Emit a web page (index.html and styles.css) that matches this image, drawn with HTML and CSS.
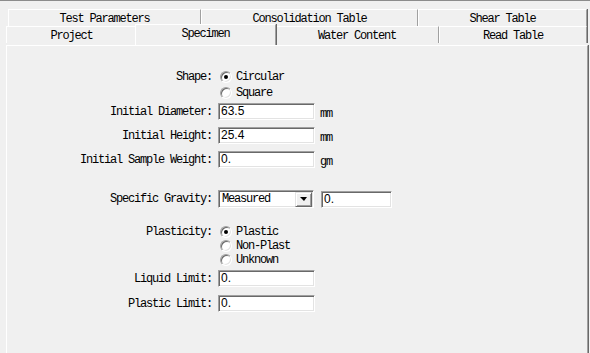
FILE: index.html
```html
<!DOCTYPE html>
<html lang="en">
<head>
  <meta charset="UTF-8">
  <title>Specimen</title>
  <link rel="stylesheet" href="styles.css">
</head>
<body>
  <div class="window">
    <div class="tabs">
      <div class="tab-row back">
        <div class="tab tab-test">Test Parameters</div>
        <div class="tab tab-consol">Consolidation Table</div>
        <div class="tab tab-shear">Shear Table</div>
      </div>
      <div class="tab-row front">
        <div class="tab tab-project">Project</div>
        <div class="tab tab-specimen active">Specimen</div>
        <div class="tab tab-water">Water Content</div>
        <div class="tab tab-read">Read Table</div>
      </div>
    </div>

    <div class="panel">
      <div class="row radio-row">
        <span class="label">Shape:</span>
        <span class="radio checked"></span><span class="opt">Circular</span>
      </div>
      <div class="row radio-row">
        <span class="label"></span>
        <span class="radio"></span><span class="opt">Square</span>
      </div>

      <div class="row field-row first-field">
        <span class="label">Initial Diameter:</span>
        <span class="input">63.5</span><span class="unit">mm</span>
      </div>
      <div class="row field-row">
        <span class="label">Initial Height:</span>
        <span class="input">25.4</span><span class="unit">mm</span>
      </div>
      <div class="row field-row">
        <span class="label">Initial Sample Weight:</span>
        <span class="input">0.</span><span class="unit">gm</span>
      </div>

      <div class="row select-row">
        <span class="label">Specific Gravity:</span>
        <span class="select">
          <span class="select-text">Measured</span>
          <span class="drop"><span class="arrow"></span></span>
        </span>
        <span class="input small">0.</span>
      </div>

      <div class="row radio-row plast-first">
        <span class="label">Plasticity:</span>
        <span class="radio checked"></span><span class="opt">Plastic</span>
      </div>
      <div class="row radio-row tight">
        <span class="label"></span>
        <span class="radio"></span><span class="opt">Non-Plast</span>
      </div>
      <div class="row radio-row tight">
        <span class="label"></span>
        <span class="radio"></span><span class="opt">Unknown</span>
      </div>

      <div class="row field-row after-radio">
        <span class="label">Liquid Limit:</span>
        <span class="input">0.</span>
      </div>
      <div class="row field-row last-field">
        <span class="label">Plastic Limit:</span>
        <span class="input">0.</span>
      </div>
    </div>
  </div>
</body>
</html>
```

FILE: styles.css
```css
body {
  margin: 0;
  background: #f0f0f0;
  font-family: "Liberation Mono", "DejaVu Sans Mono", monospace;
  font-size: 12px;
  letter-spacing: -1.2px;
  color: #000;
  overflow: hidden;
}

.window {
  height: 353px;
  border-top: 1px solid #8c8c8c;
  box-sizing: border-box;
}

/* tab strip */
.tabs {
  padding-top: 8px;
}

.tab-row {
  display: flex;
  align-items: flex-start;
}

.tab-row.back {
  margin-left: 8px;
}

.tab-row.front {
  margin-left: 6px;
}

.tab {
  box-sizing: border-box;
  height: 17px;
  padding-top: 2px;
  line-height: 15px;
  text-align: center;
  border-top: 1px solid #fff;
  border-left: 1px solid #fff;
  border-right: 1px solid #a0a0a0;
  box-shadow: 1px 0 0 #696969;
  white-space: nowrap;
}

.tab-test { width: 193px; }
.tab-consol { width: 217px; }
.tab-shear { width: 169px; }

.tab-project { width: 131px; }
.tab-specimen { width: 138px; }
.tab-water { width: 164px; }
.tab-read { width: 148px; }

.tab.active {
  position: relative;
  z-index: 1;
  height: 21px;
  margin-top: -2px;
  margin-left: -2px;
  margin-right: -1px;
  width: 141px;
  background: #f0f0f0;
}

/* page body */
.panel {
  box-sizing: border-box;
  margin-left: 6px;
  width: 582px;
  height: 320px;
  border-top: 1px solid #fff;
  border-left: 1px solid #fff;
  border-right: 1px solid #a0a0a0;
  box-shadow: 1px 0 0 #696969;
  padding-top: 23px;
}

.row {
  display: flex;
  align-items: center;
}

.label {
  width: 205px;
  flex: none;
  text-align: right;
  margin-right: 6px;
  white-space: pre;
}

.radio-row {
  height: 16px;
}

.radio-row.tight {
  height: 14px;
}

.plast-first {
  margin-top: 17px;
  height: 14px;
}

.radio {
  width: 12px;
  height: 12px;
  box-sizing: border-box;
  border-radius: 50%;
  background: #fff;
  border: 1px solid;
  border-color: #a0a0a0 #fff #fff #a0a0a0;
  box-shadow: inset 1px 1px 0 #696969, inset -1px -1px 0 #e3e3e3;
  margin-left: 2px;
  margin-right: 4px;
  position: relative;
}

.radio.checked::after {
  content: "";
  position: absolute;
  left: 3px;
  top: 3px;
  width: 4px;
  height: 4px;
  border-radius: 50%;
  background: #000;
}

.field-row {
  height: 17px;
  margin-top: 7px;
}

.field-row.first-field {
  margin-top: 2px;
}

.field-row.after-radio {
  margin-top: 3px;
}

.field-row.last-field {
  margin-top: 8px;
}

.input {
  box-sizing: border-box;
  width: 97px;
  height: 17px;
  background: #fff;
  border: 1px solid;
  border-color: #a0a0a0 #fff #fff #a0a0a0;
  box-shadow: inset 1px 1px 0 #696969, inset -1px -1px 0 #e3e3e3;
  font-family: "Liberation Sans", Arial, sans-serif;
  letter-spacing: 0;
  font-size: 12px;
  line-height: 15px;
  padding-left: 2px;
}

.input.small {
  width: 71px;
  margin-left: 7px;
}

.unit {
  margin-left: 5px;
  margin-top: 4px;
}

.select-row {
  height: 18px;
  margin-top: 22px;
}

.select {
  box-sizing: border-box;
  width: 96px;
  height: 18px;
  display: flex;
  align-items: center;
  justify-content: space-between;
  background: #fff;
  border: 1px solid;
  border-color: #a0a0a0 #fff #fff #a0a0a0;
  box-shadow: inset 1px 1px 0 #696969, inset -1px -1px 0 #e3e3e3;
  padding: 1px 1px 1px 3px;
}

.select-text {
  line-height: 14px;
}

.drop {
  box-sizing: border-box;
  width: 17px;
  height: 15px;
  background: #f0f0f0;
  border: 1px solid;
  border-color: #e3e3e3 #696969 #696969 #e3e3e3;
  box-shadow: inset 1px 1px 0 #fff, inset -1px -1px 0 #a0a0a0;
  display: flex;
  align-items: center;
  justify-content: center;
}

.arrow {
  width: 0;
  height: 0;
  border-left: 4px solid transparent;
  border-right: 3px solid transparent;
  border-top: 4px solid #000;
}
```
